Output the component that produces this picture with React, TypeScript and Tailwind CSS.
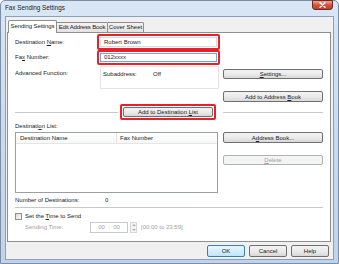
import React from "react";

const U = ({ children }: { children: React.ReactNode }) => (
  <span className="underline decoration-[0.5px] underline-offset-[1px]">{children}</span>
);

function Btn({
  children,
  className = "",
  disabled = false,
  def = false,
}: {
  children: React.ReactNode;
  className?: string;
  disabled?: boolean;
  def?: boolean;
}) {
  return (
    <div
      className={
        "flex items-center justify-center rounded-[2px] border leading-none " +
        (disabled
          ? "border-[#adb2b5] bg-[#f4f4f4] text-[#a0a0a0] "
          : def
          ? "border-[#3c7fb1] bg-linear-to-b from-[#eaf6fd] to-[#bee6fd] text-[#222] "
          : "border-[#707070] bg-linear-to-b from-[#f2f2f2] via-[#ebebeb] to-[#d8d8d8] text-[#222] ") +
        className
      }
    >
      {children}
    </div>
  );
}

export default function App() {
  return (
    <div className="w-[339px] h-[264px] overflow-hidden font-['Liberation_Sans',Arial,sans-serif] text-[6px] text-[#222]">
      <div className="w-full h-full flex flex-col bg-linear-to-b from-[#d9e7f5] via-[#c8dbef] to-[#bfd3ea] border border-[#7b8ea6] rounded-t-[5px] px-[4px] pb-[3px]">
        {/* title bar */}
        <div className="h-[15px] flex items-start justify-between shrink-0">
          <div className="mt-[3px] text-[6.3px] text-[#1a1a1a] leading-none pt-[1px]">Fax Sending Settings</div>
          <div className="mt-[-1px] mr-[1px] w-[21px] h-[10px] rounded-b-[3px] border border-[#6d2a26] bg-linear-to-b from-[#e8a596] via-[#d3533e] to-[#c4402b] flex items-center justify-center">
            <svg width="7" height="6" viewBox="0 0 7 6">
              <path d="M1 0.8 L6 5.2 M6 0.8 L1 5.2" stroke="#fff" strokeWidth="1.4" strokeLinecap="round" />
            </svg>
          </div>
        </div>
        {/* client area */}
        <div className="flex-1 flex flex-col bg-[#f0f0f0] border border-[#8ba0b8] pl-[1px] pr-[2px] pt-[3px]">
          {/* tabs */}
          <div className="flex items-end h-[12px] pl-[1px] relative z-10">
            <div className="h-[13px] w-[49px] bg-white border border-b-0 border-[#8e8f8f] rounded-t-[2px] flex items-center justify-center mb-[-1px] pb-[1px] tracking-[-0.1px]">
              Sending Settings
            </div>
            <div className="h-[10px] w-[51px] bg-linear-to-b from-[#f2f2f2] to-[#e3e3e3] border border-b-0 border-l-0 border-[#8e8f8f] rounded-tr-[2px] flex items-center justify-center tracking-[-0.15px] whitespace-nowrap">
              Edit Address Book
            </div>
            <div className="h-[10px] w-[36px] bg-linear-to-b from-[#f2f2f2] to-[#e3e3e3] border border-b-0 border-l-0 border-[#8e8f8f] rounded-tr-[2px] flex items-center justify-center">
              Cover Sheet
            </div>
          </div>
          {/* panel */}
          <div className="h-[210px] bg-white border border-[#8e8f8f] flex flex-col pl-[7px] pr-[7px] pt-[1px]">
            {/* row 1 */}
            <div className="flex items-center h-[16px]">
              <div className="w-[82px]">
                Destination <U>N</U>ame:
              </div>
              <div className="w-[123px] h-[16px] border-2 border-[#e5212b] rounded-[2px] p-[1px]">
                <div className="h-full border border-[#dadada] flex items-center pl-[3px]">Robert Brown</div>
              </div>
            </div>
            {/* row 2 */}
            <div className="flex items-center h-[15px]">
              <div className="w-[82px]">
                Fa<U>x</U> Number:
              </div>
              <div className="w-[123px] h-[15px] border-2 border-[#e5212b] rounded-[2px] p-[1px]">
                <div className="h-full border border-[#7da2ce] flex items-center pl-[3px]">012xxxx</div>
              </div>
            </div>
            {/* row 3 */}
            <div className="flex mt-[1px]">
              <div className="w-[85px] pt-[3px]">Advanced Function:</div>
              <div className="w-[119px] h-[23px] border border-[#e3e3e3] flex pt-[3px] pl-[2px]">
                <div className="w-[50px]">Subaddress:</div>
                <div>Off</div>
              </div>
              <Btn className="ml-[4px] mt-[3px] w-[100px] h-[10px]">
                <span>
                  <U>S</U>ettings...
                </span>
              </Btn>
            </div>
            {/* row 4 */}
            <div className="flex justify-end mt-[2px]">
              <Btn className="w-[100px] h-[11px]">
                <span>
                  Add to Address <U>B</U>ook
                </span>
              </Btn>
            </div>
            {/* row 5 */}
            <div className="flex items-center h-[16px] mt-[2px]">
              <div className="w-[103px] h-px bg-[#c8c8c8]" />
              <div className="ml-[2px] w-[96px] h-[16px] border-2 border-[#e5212b] rounded-[2px] p-[1px]">
                <Btn className="w-full h-full">
                  <span>
                    Add to Destination <U>L</U>ist
                  </span>
                </Btn>
              </div>
              <div className="ml-[7px] w-[100px] h-px bg-[#c8c8c8]" />
            </div>
            {/* row 6 */}
            <div className="h-[12px] flex items-center">
              Destinati<U>o</U>n List:
            </div>
            {/* row 7 */}
            <div className="flex">
              <div className="w-[203px] h-[61px] border border-[#9a9ea6] flex flex-col">
                <div className="h-[11px] flex border-b border-[#e5e5e5] bg-linear-to-b from-white to-[#f6f7f8]">
                  <div className="w-[101px] border-r border-[#e5e5e5] flex items-center pl-[4px]">Destination Name</div>
                  <div className="flex items-center pl-[3px]">Fax Number</div>
                </div>
              </div>
              <div className="ml-[5px] flex flex-col">
                <Btn className="w-[100px] h-[11px]">
                  <span>
                    A<U>d</U>dress Book...
                  </span>
                </Btn>
                <Btn disabled className="mt-[12px] w-[100px] h-[10px]">
                  <span>
                    <U>D</U>elete
                  </span>
                </Btn>
              </div>
            </div>
            {/* row 8 */}
            <div className="h-[14px] flex items-center">
              <div className="w-[90px]">Number of Destinations:</div>
              <div>0</div>
            </div>
            <div className="h-px bg-[#c8c8c8] w-full" />
            {/* row 9 */}
            <div className="flex items-center h-[9px] mt-[4px]">
              <div className="w-[7px] h-[7px] border border-[#8f8f8f] bg-linear-to-br from-[#dcdcdc] to-[#f8f8f8]" />
              <div className="ml-[3px]">
                Set the <U>T</U>ime to Send
              </div>
            </div>
            {/* row 10 */}
            <div className="flex items-center h-[11px] mt-[1px] text-[#a0a0a0]">
              <div className="w-[75px] pl-[10px]">Sending Time:</div>
              <div className="w-[38px] h-[11px] border border-[#c9c9c9] flex items-center justify-center">00&nbsp;&nbsp;:&nbsp;&nbsp;00</div>
              <div className="ml-[2px] w-[7px] h-[11px] border border-[#d6d6d6] flex flex-col items-center justify-around bg-[#f4f4f4]">
                <svg width="4" height="2" viewBox="0 0 4 2">
                  <path d="M0 2 L2 0 L4 2Z" fill="#b0b0b0" />
                </svg>
                <svg width="4" height="2" viewBox="0 0 4 2">
                  <path d="M0 0 L2 2 L4 0Z" fill="#b0b0b0" />
                </svg>
              </div>
              <div className="ml-[4px]">[00:00 to 23:59]</div>
            </div>
          </div>
          {/* bottom buttons */}
          <div className="flex justify-end gap-[4px] pr-[2px] mt-[3px]">
            <Btn def className="w-[38px] h-[12px]">OK</Btn>
            <Btn className="w-[38px] h-[12px]">Cancel</Btn>
            <Btn className="w-[38px] h-[12px]">Help</Btn>
          </div>
        </div>
      </div>
    </div>
  );
}
